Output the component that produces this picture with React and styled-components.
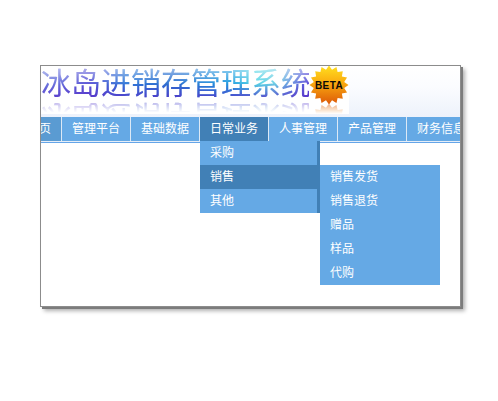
import React from "react";
import styled, { createGlobalStyle } from "styled-components";

const GlobalStyle = createGlobalStyle`
  html, body {
    margin: 0;
    padding: 0;
    background: #fff;
  }
  body {
    font-family: "Noto Sans CJK SC", "Liberation Sans", sans-serif;
    font-size: 12px;
  }
`;

const Page = styled.div`
  width: 498px;
  height: 401px;
  padding: 65px 0 0 40px;
  box-sizing: border-box;
  overflow: hidden;
`;

const Frame = styled.div`
  position: relative;
  width: 421px;
  height: 242px;
  box-sizing: border-box;
  border: 1px solid #8c8c8c;
  background: #fff;
  box-shadow: 2px 2px 0 #7c7c7c, 4px 4px 4px #b0b0b0;
`;

const Banner = styled.div`
  height: 51px;
  overflow: hidden;
  background: linear-gradient(180deg, #fff 0, #fbfcff 40%, #edf2fb 100%);
`;

const Logo = styled.div`
  display: flex;
  width: 308px;
  height: 48px;
  overflow: hidden;
  background: #fff;
`;

const Brand = styled.div`
  display: flex;
  flex-direction: column;
  width: 268px;
  flex: none;
`;

const Title = styled.div`
  height: 34px;
  font-size: 30px;
  line-height: 31px;
  font-weight: 400;
  white-space: nowrap;
  color: transparent;
  background-image:
    linear-gradient(180deg, rgba(255, 255, 255, 0.5) 8%, rgba(255, 255, 255, 0) 55%),
    linear-gradient(180deg, rgba(88, 50, 200, 0) 50%, rgba(88, 50, 200, 0.75) 90%),
    linear-gradient(90deg, #6f7ee0 0, #5a55d6 18%, #2f7ad8 32%, #2a70d0 50%, #1e9be0 70%, #52d6e6 80%, #6ed0e6 88%, #5a48d8 100%);
  -webkit-background-clip: text;
  background-clip: text;
`;

const Reflection = styled.div`
  height: 14px;
  overflow: hidden;
  opacity: 0.45;
  -webkit-mask-image: linear-gradient(180deg, #000 0, transparent 90%);
  mask-image: linear-gradient(180deg, #000 0, transparent 90%);

  & > * {
    transform: scaleY(-1);
  }
`;

const Badge = styled.div`
  display: flex;
  flex-direction: column;
  flex: none;
  width: 40px;
`;

const BadgeGlyph = styled.svg`
  display: block;
  width: 40px;
  height: 38px;
  flex: none;
`;

const BadgeShadow = styled.div`
  height: 10px;
  overflow: hidden;
  opacity: 0.5;
  -webkit-mask-image: linear-gradient(180deg, #000 0, transparent 100%);
  mask-image: linear-gradient(180deg, #000 0, transparent 100%);

  & > svg {
    display: block;
    width: 40px;
    height: 38px;
    transform: scaleY(-1);
  }
`;

const NavBar = styled.div`
  height: 24px;
  overflow: hidden;
  border-bottom: 1px solid #e6eef8;
  box-shadow: 0 1px 0 #65a5e8;
  background: #fff;
`;

const NavTrack = styled.div`
  display: flex;
  width: max-content;
  margin-left: -24px;
`;

const NavItem = styled.div`
  flex: none;
  height: 24px;
  padding: 0 10px;
  border-right: 1px solid #dce9f6;
  line-height: 22px;
  color: #fff;
  white-space: nowrap;
  background: ${(p) => (p.$active ? "#4180b6" : p.$dim ? "#5a9bd2" : "#65a9e5")};
`;

const Menu = styled.div`
  position: absolute;
  width: 120px;
  background: #65a9e5;
  color: #fff;
  left: ${(p) => p.$left}px;
  top: ${(p) => p.$top}px;
`;

const MainMenu = styled(Menu)`
  &::after {
    content: "";
    position: absolute;
    top: 0;
    right: 0;
    bottom: 0;
    width: 3px;
    background: #4180b6;
  }
`;

const MenuItem = styled.div`
  height: 24px;
  line-height: 22px;
  padding-left: 10px;
  background: ${(p) => (p.$active ? "#4180b6" : "transparent")};
`;

const titleText = "冰岛进销存管理系统";
const navItems = ["首页", "管理平台", "基础数据", "日常业务", "人事管理", "产品管理", "财务信息"];
const mainItems = ["采购", "销售", "其他"];
const subItems = ["销售发货", "销售退货", "赠品", "样品", "代购"];

const burst = Array.from({ length: 32 }, (_, i) => {
  const r = i % 2 === 0 ? 19.5 : 15.5;
  const a = (Math.PI * 2 * i) / 32;
  return `${(20 + r * Math.cos(a)).toFixed(2)},${(19 + r * Math.sin(a)).toFixed(2)}`;
}).join(" ");

function BadgeArt({ id }) {
  return (
    <>
      <defs>
        <linearGradient id={id} x1="0" y1="0" x2="0" y2="1">
          <stop offset="0" stopColor="#ffe020" />
          <stop offset="0.4" stopColor="#fbb010" />
          <stop offset="1" stopColor="#dd5808" />
        </linearGradient>
      </defs>
      <polygon points={burst} fill={`url(#${id})`} />
      <text
        x="20"
        y="23"
        textAnchor="middle"
        fontFamily="'Liberation Sans', sans-serif"
        fontWeight="700"
        fontSize="10"
        letterSpacing="0.4"
        fill="#0c0a06"
      >
        BETA
      </text>
    </>
  );
}

export default function App() {
  return (
    <Page>
      <GlobalStyle />
      <Frame>
        <Banner>
          <Logo>
            <Brand>
              <Title>{titleText}</Title>
              <Reflection aria-hidden="true">
                <Title>{titleText}</Title>
              </Reflection>
            </Brand>
            <Badge>
              <BadgeGlyph viewBox="0 0 40 38">
                <BadgeArt id="burstTop" />
              </BadgeGlyph>
              <BadgeShadow aria-hidden="true">
                <svg viewBox="0 0 40 38">
                  <BadgeArt id="burstLow" />
                </svg>
              </BadgeShadow>
            </Badge>
          </Logo>
        </Banner>
        <NavBar>
          <NavTrack>
            {navItems.map((name) => (
              <NavItem key={name} $active={name === "日常业务"} $dim={name === "首页"}>
                {name}
              </NavItem>
            ))}
          </NavTrack>
        </NavBar>
        <MainMenu $left={159} $top={75}>
          {mainItems.map((name) => (
            <MenuItem key={name} $active={name === "销售"}>
              {name}
            </MenuItem>
          ))}
        </MainMenu>
        <Menu $left={279} $top={99}>
          {subItems.map((name) => (
            <MenuItem key={name}>{name}</MenuItem>
          ))}
        </Menu>
      </Frame>
    </Page>
  );
}
